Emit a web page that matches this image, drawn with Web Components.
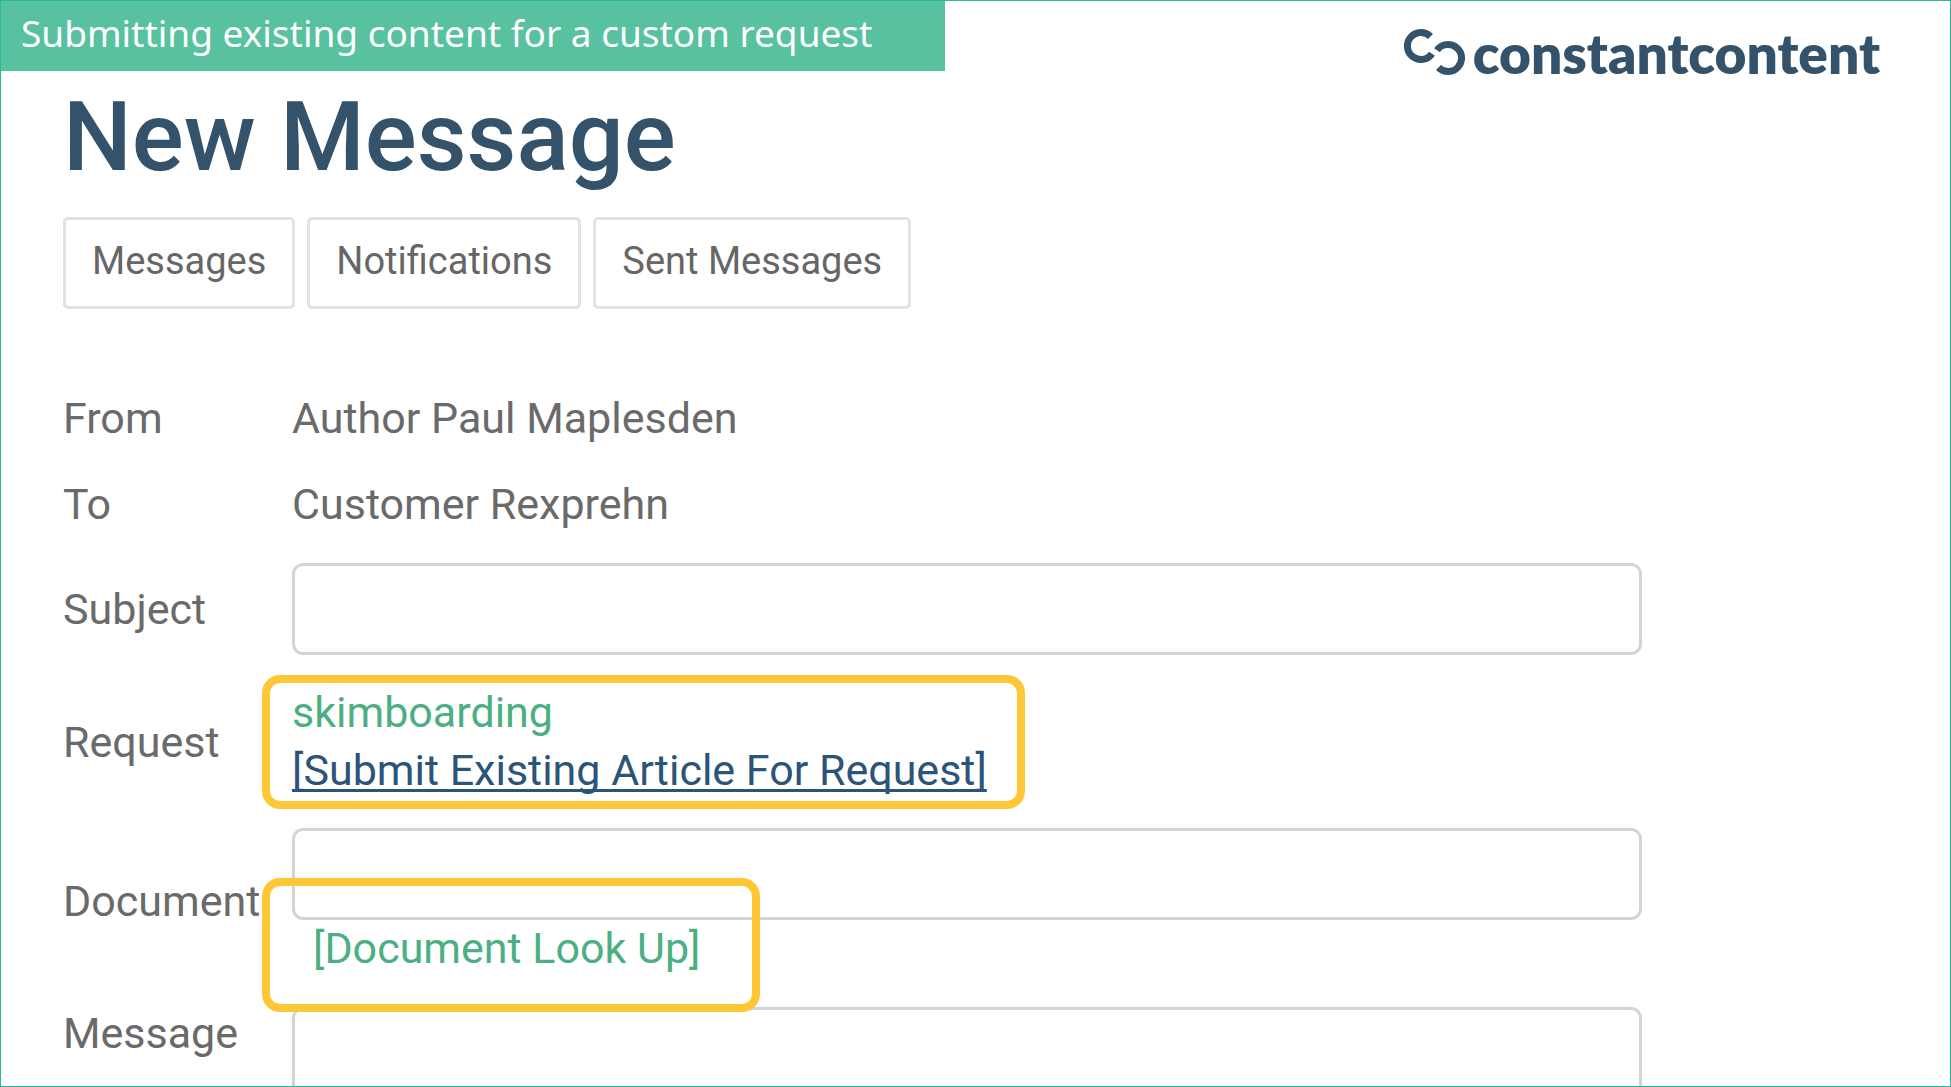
<!DOCTYPE html>
<html lang="en">
<head>
<meta charset="utf-8">
<title>New Message</title>
<style>
  html, body { margin: 0; height: 100%; background: #fff; }
  body { font-family: Roboto, "Liberation Sans", sans-serif; color: #6a6a6a; }
</style>
</head>
<body>
<cc-page>
  <cc-banner slot="banner">Submitting existing content for a custom request</cc-banner>
  <cc-logo slot="logo">constantcontent</cc-logo>
  <cc-title>New Message</cc-title>
  <cc-tabs>
    <cc-tab>Messages</cc-tab>
    <cc-tab>Notifications</cc-tab>
    <cc-tab>Sent Messages</cc-tab>
  </cc-tabs>
  <cc-form>
    <cc-row label="From">Author Paul Maplesden</cc-row>
    <cc-row label="To">Customer Rexprehn</cc-row>
    <cc-field label="Subject"></cc-field>
    <cc-request label="Request">
      <cc-link>skimboarding</cc-link>
      <cc-link current>[Submit Existing Article For Request]</cc-link>
    </cc-request>
    <cc-field label="Document"><cc-lookup><cc-link>[Document Look Up]</cc-link></cc-lookup></cc-field>
    <cc-field label="Message" multiline></cc-field>
  </cc-form>
</cc-page>
<script>
const define = (name, html, init) => {
  const template = document.createElement('template');
  template.innerHTML = html;
  customElements.define(name, class extends HTMLElement {
    constructor() {
      super();
      this.attachShadow({ mode: 'open' }).append(template.content.cloneNode(true));
    }
    connectedCallback() { if (init) init(this, this.shadowRoot); }
  });
};
const setLabel = (host, root) => { root.querySelector('.label').textContent = host.getAttribute('label'); };

define('cc-page', `<style>
  :host { display: block; box-sizing: border-box; height: 100vh; overflow: hidden; border: 1px solid #2fb597; }
  header { display: flex; justify-content: space-between; align-items: flex-start; height: 80px; }
  main { padding: 0 62px; }
</style>
<header><slot name="banner"></slot><slot name="logo"></slot></header>
<main><slot></slot></main>`);

define('cc-banner', `<style>
  :host { display: block; box-sizing: border-box; width: 944px; height: 70px; padding-left: 20px;
    background: #58c1a0; color: #fff; font: 37px/64px "Noto Sans", "Open Sans", sans-serif; white-space: nowrap; }
</style><slot></slot>`);

define('cc-logo', `<style>
  :host { display: flex; gap: 8px; margin: 22px 70px 0 0; color: #34536a;
    font: 800 55px/60px Lato, sans-serif; white-space: nowrap; }
  svg { width: 64px; height: 52px; flex: none; margin-top: 5px; }
</style>
<svg viewBox="0 0 64 52" aria-hidden="true" fill="none" stroke="currentColor" stroke-width="7">
  <path d="M29.500 8.500A13.500 13.500 0 1 0 31 25.700"/>
  <path d="M36 22.300A13.500 13.500 0 1 1 37.500 39.500"/>
</svg>
<span><slot></slot></span>`);

define('cc-title', `<style>
  :host { display: block; color: #34536a; }
  h1 { margin: 0; font-size: 97px; line-height: 112px; font-weight: 500; white-space: nowrap; }
</style><h1><slot></slot></h1>`);

define('cc-tabs', `<style>
  :host { display: block; margin-top: 24px; }
  nav { display: flex; gap: 12px; }
</style><nav><slot></slot></nav>`);

define('cc-tab', `<style>
  :host { display: block; }
  button { display: block; height: 92px; padding: 0 26px 4px; border: 3px solid #e2e2e2; border-radius: 5px;
    background: #fff; color: #666; font: 38px/44px Roboto, sans-serif; white-space: nowrap; }
</style><button type="button"><slot></slot></button>`);

define('cc-form', `<style>
  form { display: flex; flex-direction: column; margin-top: 66px; font-size: 43px; }
</style><form><slot></slot></form>`);

const rowStyle = `
  :host { display: grid; grid-template-columns: 229px minmax(0, 1350px); align-items: center; }
  .label { white-space: nowrap; line-height: 52px; }`;

define('cc-row', `<style>${rowStyle}
  :host { min-height: 86px; }
</style><span class="label"></span><span><slot></slot></span>`, setLabel);

define('cc-request', `<style>${rowStyle}
  :host { margin-top: 20px; }
  .box { justify-self: start; margin-left: -30px; padding: 0 30px 2px 22px; border: 8px solid #ffc735; border-radius: 18px; }
</style><span class="label"></span><div class="box"><slot></slot></div>`, setLabel);

define('cc-field', `<style>${rowStyle}
  :host { margin-top: 16px; }
  :host([label="Document"]) { margin-top: 19px; }
  :host([multiline]) { margin-top: 33px; align-items: start; }
  input, textarea { display: block; box-sizing: border-box; width: 100%; height: 92px; margin: 0; padding: 0 20px;
    border: 3px solid #d4d4d4; border-radius: 11px; background: #fff; color: inherit; font: inherit; resize: none; outline: 0; }
  textarea { height: 260px; padding: 20px; }
</style><label class="label" for="control"></label><div><input id="control" type="text"><slot></slot></div>`,
(host, root) => {
  setLabel(host, root);
  if (host.hasAttribute('multiline')) {
    const area = document.createElement('textarea');
    area.id = 'control';
    root.querySelector('input').replaceWith(area);
  }
});

define('cc-lookup', `<style>
  :host { display: block; position: relative; width: max-content; padding: 2px 0 0 21px; --line: 52px; }
  .ring { position: absolute; inset: -42px -60px -38px -30px; border: 8px solid #ffc735; border-radius: 18px; pointer-events: none; }
</style><slot></slot><div class="ring"></div>`);

define('cc-link', `<style>
  :host { display: block; line-height: var(--line, 58px); }
  a { color: #4caf82; text-decoration: none; white-space: nowrap; }
  :host([current]) a { color: #2b5478; text-decoration: underline; text-decoration-thickness: 3px; text-underline-offset: 4px; text-decoration-skip-ink: none; }
</style><a href="#"><slot></slot></a>`);
</script>
</body>
</html>
